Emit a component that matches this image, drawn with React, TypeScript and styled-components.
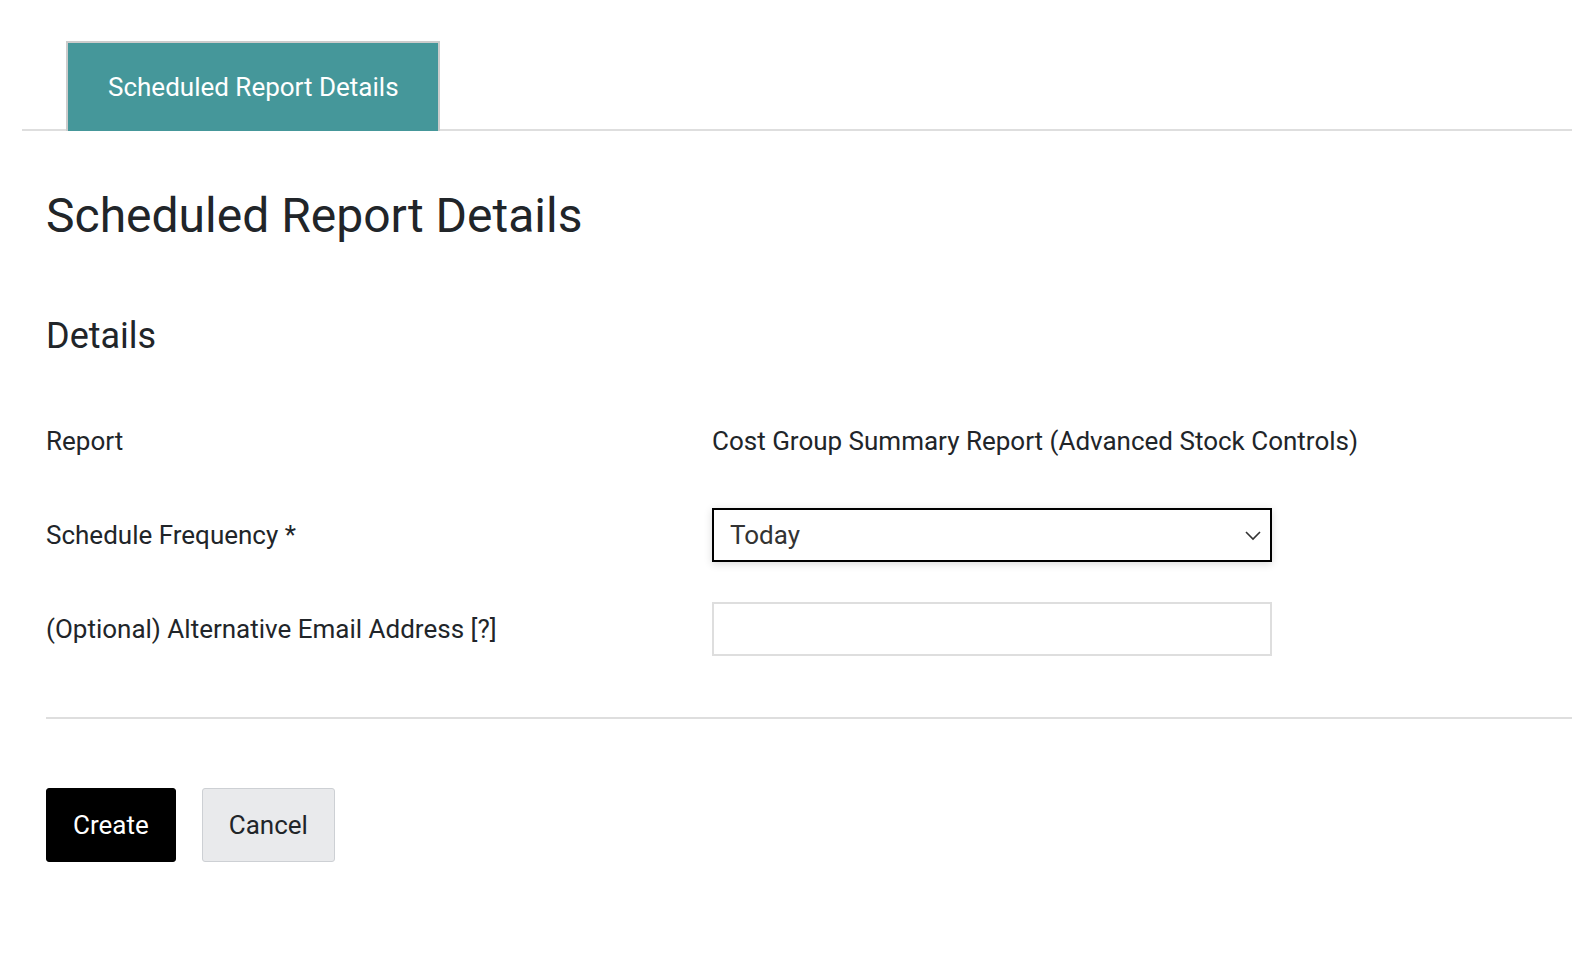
import React from "react";
import styled, { createGlobalStyle } from "styled-components";

const GlobalStyle = createGlobalStyle`
  body {
    margin: 0;
    background: #ffffff;
    font-family: Roboto, "Liberation Sans", sans-serif;
    color: #212529;
  }
`;

const Page = styled.div`
  padding: 41px 0 0 22px;
`;

const TabBar = styled.div`
  display: flex;
  padding-left: 44px;
  border-bottom: 2px solid #dedede;
`;

const Tab = styled.div`
  background: #45979a;
  color: #ffffff;
  font-size: 26px;
  line-height: 88px;
  padding: 0 39px 0 40px;
  border: 2px solid #cccccc;
  border-bottom: none;
  margin-bottom: -2px;
`;

const Content = styled.div`
  padding-left: 24px;
`;

const Title = styled.h1`
  font-size: 48px;
  font-weight: 400;
  margin: 57px 0 0 0;
  line-height: 56px;
`;

const SectionTitle = styled.h2`
  font-size: 36px;
  font-weight: 400;
  margin: 72px 0 0 0;
  line-height: 40px;
`;

const Form = styled.div`
  display: flex;
  flex-direction: column;
  gap: 40px;
  margin-top: 58px;
`;

const Row = styled.div`
  display: grid;
  grid-template-columns: 666px 1fr;
  align-items: center;
  min-height: 54px;
`;

const Label = styled.div`
  font-size: 26px;
  line-height: 30px;
`;

const Value = styled.div`
  font-size: 26px;
  line-height: 30px;
`;

const SelectBox = styled.div`
  width: 560px;
  height: 54px;
  box-sizing: border-box;
  border: 2px solid #000000;
  box-shadow: 0 2px 8px rgba(0, 0, 0, 0.15);
  display: flex;
  align-items: center;
  justify-content: space-between;
  padding: 0 8px 0 16px;
  font-size: 26px;
  color: #333333;
`;

const TextInput = styled.input`
  width: 560px;
  height: 54px;
  box-sizing: border-box;
  border: 2px solid #dedede;
  outline: none;
  font-size: 26px;
  padding: 0 16px;
`;

const Divider = styled.hr`
  border: none;
  border-top: 2px solid #dedede;
  margin: 61px 0 0 0;
`;

const Actions = styled.div`
  display: flex;
  gap: 26px;
  margin-top: 69px;
`;

const Button = styled.button<{ $primary?: boolean }>`
  font-family: Roboto, "Liberation Sans", sans-serif;
  font-size: 26px;
  height: 74px;
  padding: 0 26px;
  border-radius: 3px;
  cursor: pointer;
  background: ${(p) => (p.$primary ? "#000000" : "#e9eaec")};
  color: ${(p) => (p.$primary ? "#ffffff" : "#212529")};
  border: 1px solid ${(p) => (p.$primary ? "#000000" : "#cdd0d4")};
`;

const Chevron = () => (
  <svg width="18" height="18" viewBox="0 0 18 18" fill="none">
    <path d="M2 6l7 7 7-7" stroke="#333" strokeWidth="1.6" />
  </svg>
);

export default function App() {
  return (
    <>
      <GlobalStyle />
      <Page>
        <TabBar>
          <Tab>Scheduled Report Details</Tab>
        </TabBar>
        <Content>
          <Title>Scheduled Report Details</Title>
          <SectionTitle>Details</SectionTitle>
          <Form>
            <Row>
              <Label>Report</Label>
              <Value>Cost Group Summary Report (Advanced Stock Controls)</Value>
            </Row>
            <Row>
              <Label>Schedule Frequency *</Label>
              <SelectBox>
                <span>Today</span>
                <Chevron />
              </SelectBox>
            </Row>
            <Row>
              <Label>(Optional) Alternative Email Address [?]</Label>
              <TextInput type="text" />
            </Row>
          </Form>
          <Divider />
          <Actions>
            <Button $primary>Create</Button>
            <Button>Cancel</Button>
          </Actions>
        </Content>
      </Page>
    </>
  );
}
